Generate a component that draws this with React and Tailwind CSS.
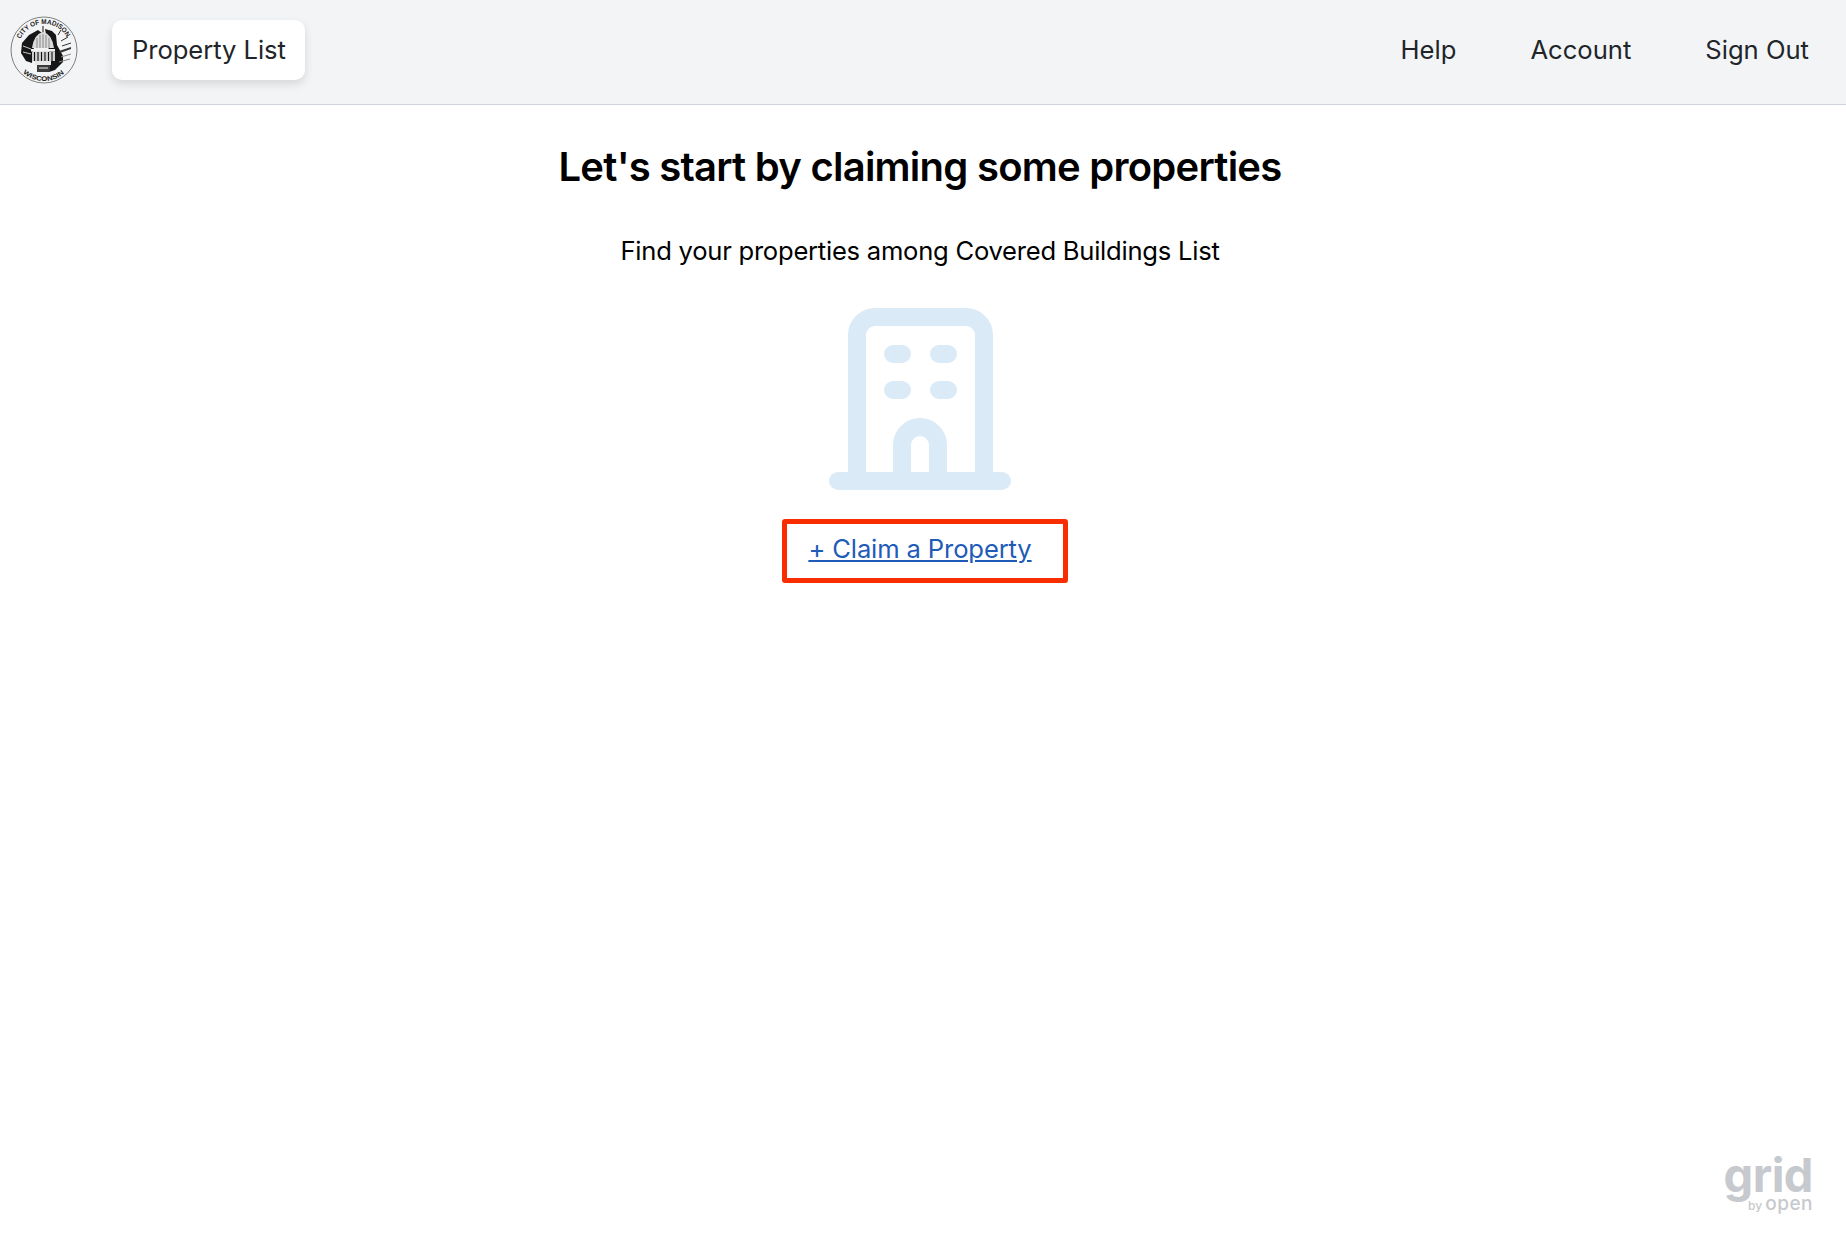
import React from "react";

function Seal() {
  return (
    <svg width="70" height="70" viewBox="0 0 70 70" className="block">
      <defs>
        <path id="sealTop" d="M11.4 24 A26 26 0 0 1 58.6 24" />
        <path id="sealBottom" d="M14 57.8 A31 31 0 0 0 56 57.8" />
      </defs>
      <circle cx="35" cy="35" r="33" fill="none" stroke="#4a4a4a" strokeWidth="0.7" />
      <text fill="#1c1c1c" fontSize="6.8" fontFamily="'Liberation Sans', sans-serif" fontWeight="700">
        <textPath href="#sealTop" textLength="57" lengthAdjust="spacingAndGlyphs">CITY OF MADISON</textPath>
      </text>
      <text fill="#1c1c1c" fontSize="6.6" fontFamily="'Liberation Sans', sans-serif" fontWeight="700">
        <textPath href="#sealBottom" textLength="45" lengthAdjust="spacingAndGlyphs">WISCONSIN</textPath>
      </text>
      <path d="M12 38 L13 28 L20 20 L29 15 L33 18 L27 26 L24 36 L23 48 L17 46 Z" fill="#161616" />
      <path d="M36 14 L43 16 L47 20 L48 30 L54 41 L54 47 L46 55 L40 57 L40 36 Z" fill="#161616" />
      <path d="M34 11 V18" stroke="#555" strokeWidth="1.4" />
      <path d="M34 17 Q43 19 45 33 H23 Q25 19 34 17 Z" fill="#dcdcdc" />
      <path d="M28 23 V33 M31 20 V33 M34 19 V33 M37 20 V33 M40 23 V33" stroke="#666" strokeWidth="0.7" />
      <path d="M22 34 H46 V36.5 H22 Z" fill="#f2f2f2" />
      <path d="M23 36.5 H46 V46 H23 Z" fill="#d0d0d0" />
      <path d="M25.5 37 V46 M29 37 V46 M32.5 37 V46 M36 37 V46 M39.5 37 V46 M43 37 V46" stroke="#111" strokeWidth="1.1" />
      <path d="M26 46 H42 V50 H26 Z" fill="#e8e8e8" />
      <path d="M28 50 H41 V57 H28 Z" fill="#3a3a3a" />
      <path d="M30 49 H38 M30 53 H39" stroke="#eee" strokeWidth="1.2" />
      <path d="M49 20 L52 15 M52 26 L59 22 M53 31 L62 28" stroke="#333" strokeWidth="1" />
      <path d="M50 36 L62 32 L62 34 L51 38 Z" fill="#333" />
      <path d="M52 42 L62 39 M50 47 L61 44" stroke="#888" strokeWidth="1" />
      <path d="M14 31 L22 34 M14 37 L22 39" stroke="#ddd" strokeWidth="0.9" />
    </svg>
  );
}

function BuildingIcon() {
  return (
    <svg width="182" height="182" viewBox="0 0 182 182" fill="none" stroke="#dbeaf7" strokeWidth="18" strokeLinecap="round" strokeLinejoin="round" className="block">
      <path d="M9 173 H173" />
      <path d="M28 173 V27 a18 18 0 0 1 18-18 h91 a18 18 0 0 1 18 18 V173" />
      <path d="M64 46 H73 M110 46 H119 M64 82 H73 M110 82 H119" />
      <path d="M73 173 V137 a18 18 0 0 1 18-18 a18 18 0 0 1 18 18 V173" strokeLinecap="butt" />
    </svg>
  );
}

export default function App() {
  return (
    <div className="min-h-[1236px] bg-white font-['Inter',sans-serif] relative overflow-hidden">
      <header className="h-[105px] bg-[#f3f4f6] border-b border-[#cfd4da] flex items-center justify-between pl-[9px] pr-[37px] pb-[5px] text-[25.6px] text-[#212529]">
        <div className="flex items-center gap-[32px]">
          <Seal />
          <a className="h-[60px] pt-[1px] pl-[20px] pr-[19px] flex items-center bg-white rounded-[10px] shadow-[0_4px_10px_rgba(0,0,0,0.12)] ml-px tracking-[-0.05px]">Property List</a>
        </div>
        <nav className="flex items-center gap-[74px] pt-[1px]">
          <a>Help</a>
          <a>Account</a>
          <a>Sign Out</a>
        </nav>
      </header>
      <main className="w-[1840px] flex flex-col items-center text-black">
        <h1 className="mt-[38px] text-[40px] leading-[48px] font-semibold tracking-[-0.75px]">Let's start by claiming some properties</h1>
        <p className="mt-[41px] text-[25.6px] leading-[38px] tracking-[-0.25px]">Find your properties among Covered Buildings List</p>
        <div className="mt-[38px]"><BuildingIcon /></div>
        <div className="relative mt-[40px] leading-[38px] text-[25.6px] tracking-[-0.13px]">
          <a className="underline text-[#1f5bb8]">+ Claim a Property</a>
          <span className="absolute left-[-26px] top-[-11px] w-[286px] h-[64px] border-[5px] border-[#f82d00] rounded-[3px]" />
        </div>
      </main>
      <div className="absolute right-[33px] bottom-[24px] flex flex-col items-end text-[#c6c9cd]">
        <span className="text-[47px] font-bold leading-[40px] tracking-[-0.5px]">grid</span>
        <div className="flex items-baseline gap-[3px] leading-[13px] mt-[2px]">
          <span className="text-[12px] font-medium">by</span>
          <span className="text-[19px] font-medium tracking-[0.5px]">open</span>
        </div>
      </div>
    </div>
  );
}
